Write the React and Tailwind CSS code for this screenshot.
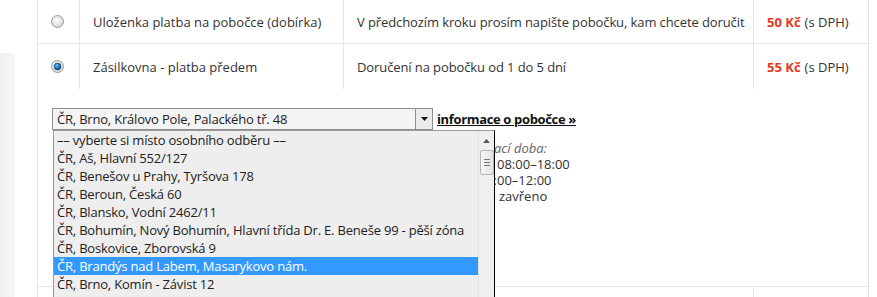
import React from "react";

function Radio({ checked }) {
  return (
    <svg width="13" height="13" viewBox="0 0 13 13">
      <defs>
        <radialGradient id="rg1" cx="45%" cy="40%" r="60%">
          <stop offset="0%" stopColor="#ffffff" />
          <stop offset="100%" stopColor="#d4d4d4" />
        </radialGradient>
        <radialGradient id="rg2" cx="40%" cy="35%" r="65%">
          <stop offset="0%" stopColor="#6fc3ff" />
          <stop offset="55%" stopColor="#1a7fd0" />
          <stop offset="100%" stopColor="#0a3f6e" />
        </radialGradient>
      </defs>
      <circle cx="6.5" cy="6.5" r="6" fill="url(#rg1)" stroke="#9a9a9a" strokeWidth="1" />
      {checked && <circle cx="6.5" cy="6.5" r="3.4" fill="url(#rg2)" stroke="#0b3d66" strokeWidth="0.6" />}
    </svg>
  );
}

const items = [
  "–– vyberte si místo osobního odběru ––",
  "ČR, Aš, Hlavní 552/127",
  "ČR, Benešov u Prahy, Tyršova 178",
  "ČR, Beroun, Česká 60",
  "ČR, Blansko, Vodní 2462/11",
  "ČR, Bohumín, Nový Bohumín, Hlavní třída Dr. E. Beneše 99 - pěší zóna",
  "ČR, Boskovice, Zborovská 9",
  "ČR, Brandýs nad Labem, Masarykovo nám.",
  "ČR, Brno, Komín - Závist 12",
];

function Row({ checked, name, desc, price, last }) {
  return (
    <div className={`flex h-[45px] ${last ? "h-[46px]" : "border-b border-[#e6e6e6]"}`}>
      <div className="w-[42px] border-r border-[#e6e6e6] flex items-center pl-[13px]">
        <Radio checked={checked} />
      </div>
      <div className="w-[264px] border-r border-[#e6e6e6] flex items-center pl-[13px] whitespace-nowrap">
        {name}
      </div>
      <div className="w-[410px] border-r border-[#e6e6e6] flex items-center pl-[13px] whitespace-nowrap tracking-[-0.1px]">
        {desc}
      </div>
      <div className="flex-1 flex items-center pl-[13px] whitespace-nowrap">
        <span className="font-bold text-[#e8371e]">{price}</span>
        <span className="ml-[4px]">(s DPH)</span>
      </div>
    </div>
  );
}

export default function App() {
  return (
    <div className="w-[877px] h-[297px] overflow-hidden bg-white flex font-['Open_Sans',sans-serif] text-[13px] text-[#333] leading-[16px]">
      <div className="w-[37px] shrink-0">
        <div className="mt-[53px] w-[15px] h-[260px] bg-gradient-to-r from-[#f0f0f0] to-[#f6f6f6]" />
      </div>
      <div className="w-[832px] shrink-0 border-x border-[#e6e6e6] flex flex-col">
        <Row name="Uloženka platba na pobočce (dobírka)" desc="V předchozím kroku prosím napište pobočku, kam chcete doručit" price="50 Kč" />
        <Row checked name="Zásilkovna - platba předem" desc="Doručení na pobočku od 1 do 5 dní" price="55 Kč" last />
        <div className="relative h-[201px] border-b border-[#e6e6e6] pl-[14px] pt-[19px]">
          <div className="flex items-center">
            <div className="w-[381px] h-[22px] border border-[#8e8e8e] bg-[#f4f4f4] flex items-center">
              <span className="flex-1 pl-[4px] whitespace-nowrap text-[#222] tracking-[-0.2px]">ČR, Brno, Královo Pole, Palackého tř. 48</span>
              <div className="w-[17px] h-[20px] border-l border-[#8e8e8e] bg-[#ececec] flex items-center justify-center">
                <svg width="7" height="4" viewBox="0 0 7 4"><path d="M0 0h7L3.5 4z" fill="#111" /></svg>
              </div>
            </div>
            <a className="ml-[4px] font-bold underline text-[#111] whitespace-nowrap tracking-[-0.35px]">informace o pobočce »</a>
          </div>
          <div className="mt-[10px] flex flex-col whitespace-nowrap">
            <div className="flex italic text-[#666]"><span className="w-[442px] text-right overflow-hidden">Otevír</span><span>ací doba:</span></div>
            <div className="flex"><span className="w-[445px] text-right overflow-hidden">Po–Pá&nbsp;</span><span>08:00–18:00</span></div>
            <div className="flex"><span className="w-[445px] text-right overflow-hidden">So 08:</span><span>00–12:00</span></div>
            <div className="flex"><span className="w-[447px] text-right overflow-hidden">Ne&nbsp;</span><span>zavřeno</span></div>
          </div>
          <div className="absolute left-[15px] top-[41px] w-[442px] h-[180px] bg-[#eeeeee] border-t border-l border-[#9a9a9a] border-r border-r-black flex">
            <div className="flex-1 flex flex-col overflow-hidden">
              {items.map((t, i) => (
                <div
                  key={i}
                  className={`h-[18px] leading-[18px] pl-[3px] whitespace-nowrap tracking-[-0.2px] ${i === 7 ? "bg-[#3399ff] text-white" : "text-[#222]"}`}
                >
                  {t}
                </div>
              ))}
            </div>
            <div className="w-[16px] bg-[#f0f0f0] border-l border-[#e2e2e2] flex flex-col items-center">
              <div className="h-[19px] flex items-center justify-center">
                <svg width="7" height="4" viewBox="0 0 7 4"><path d="M3.5 0L7 4H0z" fill="#555" /></svg>
              </div>
              <div className="w-[14px] h-[25px] border border-[#b5b5b5] rounded-[2px] bg-gradient-to-r from-[#f7f7f7] to-[#e2e2e2] flex flex-col items-center justify-center gap-[2px]">
                <div className="w-[6px] h-px bg-[#777]" />
                <div className="w-[6px] h-px bg-[#777]" />
                <div className="w-[6px] h-px bg-[#777]" />
              </div>
            </div>
          </div>
        </div>
        <div className="flex h-[10px]">
          <div className="w-[42px] border-r border-[#e6e6e6]" />
          <div className="w-[264px] border-r border-[#e6e6e6]" />
          <div className="w-[410px] border-r border-[#e6e6e6]" />
          <div className="flex-1" />
        </div>
      </div>
    </div>
  );
}
